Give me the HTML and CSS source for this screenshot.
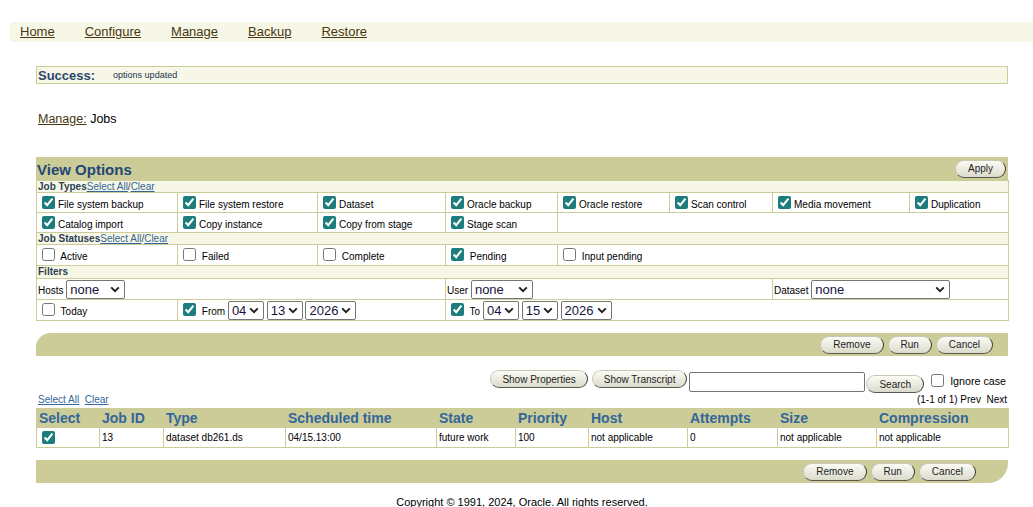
FILE: index.html
```html
<!DOCTYPE html>
<html>
  <head>
    <meta name="viewport" content="width=device-width, initial-scale=1.0">
    <title>Manage: Jobs</title>
    <link rel="stylesheet" href="styles.css">
  </head>
  <body>

    <div class="nav">
      <a href="#">Home</a>
      <a href="#">Configure</a>
      <a href="#">Manage</a>
      <a href="#">Backup</a>
      <a href="#">Restore</a>
    </div>

    <div class="page">

      <div class="message">
        <span class="message-title">Success:</span>
        <span class="message-text">options updated</span>
      </div>

      <div class="crumbs"><a href="#">Manage:</a> Jobs</div>

      <div class="panel-head">
        <span class="panel-title">View Options</span>
        <button class="btn">Apply</button>
      </div>

      <table class="options">
        <colgroup>
          <col style="width: 141px">
          <col style="width: 140px">
          <col style="width: 128px">
          <col style="width: 112px">
          <col style="width: 112px">
          <col style="width: 103px">
          <col style="width: 137px">
          <col style="width: 99px">
        </colgroup>
        <tr class="section">
          <td colspan="8"><b>Job Types</b><a href="#">Select All</a>/<a href="#">Clear</a></td>
        </tr>
        <tr class="row">
          <td><input type="checkbox" checked>File system backup</td>
          <td><input type="checkbox" checked>File system restore</td>
          <td><input type="checkbox" checked>Dataset</td>
          <td><input type="checkbox" checked>Oracle backup</td>
          <td><input type="checkbox" checked>Oracle restore</td>
          <td><input type="checkbox" checked>Scan control</td>
          <td><input type="checkbox" checked>Media movement</td>
          <td><input type="checkbox" checked>Duplication</td>
        </tr>
        <tr class="row">
          <td><input type="checkbox" checked>Catalog import</td>
          <td><input type="checkbox" checked>Copy instance</td>
          <td><input type="checkbox" checked>Copy from stage</td>
          <td><input type="checkbox" checked>Stage scan</td>
          <td colspan="4"></td>
        </tr>
        <tr class="section">
          <td colspan="8"><b>Job Statuses</b><a href="#">Select All</a>/<a href="#">Clear</a></td>
        </tr>
        <tr class="row row-status">
          <td><input type="checkbox"> Active</td>
          <td><input type="checkbox"> Failed</td>
          <td><input type="checkbox"> Complete</td>
          <td><input type="checkbox" checked> Pending</td>
          <td colspan="4"><input type="checkbox"> Input pending</td>
        </tr>
        <tr class="section section-tall">
          <td colspan="8"><b>Filters</b></td>
        </tr>
        <tr class="row row-filter">
          <td colspan="3" class="filter">Hosts <select class="sel-host"><option>none</option></select></td>
          <td colspan="3" class="filter">User <select class="sel-user"><option>none</option></select></td>
          <td colspan="2" class="filter">Dataset <select class="sel-dataset"><option>none</option></select></td>
        </tr>
        <tr class="row row-date">
          <td><input type="checkbox"> Today</td>
          <td colspan="2" class="filter"><input type="checkbox" checked> From
            <select class="sel-num"><option>04</option></select>
            <select class="sel-num"><option>13</option></select>
            <select class="sel-year"><option>2026</option></select>
          </td>
          <td colspan="5" class="filter"><input type="checkbox" checked> To
            <select class="sel-num"><option>04</option></select>
            <select class="sel-num"><option>15</option></select>
            <select class="sel-year"><option>2026</option></select>
          </td>
        </tr>
      </table>

      <div class="action-bar action-bar-top">
        <button class="btn">Remove</button>
        <button class="btn">Run</button>
        <button class="btn">Cancel</button>
      </div>

      <div class="search">
        <button class="btn btn-wide">Show Properties</button>
        <button class="btn btn-wide btn-transcript">Show Transcript</button>
        <input type="text" class="search-input">
        <button class="btn btn-search">Search</button>
        <label class="ignore"><input type="checkbox"> Ignore case</label>
      </div>

      <div class="list-links">
        <div><a href="#">Select All</a>&nbsp; <a href="#">Clear</a></div>
        <div>(1-1 of 1) Prev&nbsp; Next</div>
      </div>

      <table class="jobs">
        <colgroup>
          <col style="width: 63px">
          <col style="width: 64px">
          <col style="width: 122px">
          <col style="width: 151px">
          <col style="width: 79px">
          <col style="width: 73px">
          <col style="width: 99px">
          <col style="width: 90px">
          <col style="width: 99px">
          <col style="width: 132px">
        </colgroup>
        <tr class="jobs-head">
          <th>Select</th>
          <th>Job ID</th>
          <th>Type</th>
          <th>Scheduled time</th>
          <th>State</th>
          <th>Priority</th>
          <th>Host</th>
          <th>Attempts</th>
          <th>Size</th>
          <th>Compression</th>
        </tr>
        <tr class="jobs-row">
          <td><input type="checkbox" checked></td>
          <td>13</td>
          <td>dataset db261.ds</td>
          <td>04/15.13:00</td>
          <td>future work</td>
          <td>100</td>
          <td>not applicable</td>
          <td>0</td>
          <td>not applicable</td>
          <td>not applicable</td>
        </tr>
      </table>

      <div class="action-bar action-bar-bottom">
        <button class="btn">Remove</button>
        <button class="btn">Run</button>
        <button class="btn">Cancel</button>
      </div>

      <div class="copyright">Copyright &copy; 1991, 2024, Oracle. All rights reserved.</div>

    </div>

  </body>
</html>
```

FILE: styles.css
```css
* {
  font-family: "Liberation Sans", Arial, sans-serif;
}

body {
  margin: 0px;
  padding: 0px;
  color: rgb(0, 0, 0);
}

input[type="checkbox"] {
  accent-color: rgb(29, 125, 125);
  width: 13px;
  height: 13px;
}

a {
  color: rgb(51, 102, 153);
}

.nav {
  display: flex;
  align-items: center;
  gap: 30px;
  height: 20px;
  margin: 22px 0px 0px 10px;
  padding-left: 10px;
  background-color: rgb(247, 247, 231);
}

.nav a {
  font-size: 13px;
  line-height: 18px;
  color: rgb(72, 55, 16);
}

.page {
  width: 972px;
  padding-left: 36px;
}

.message {
  display: flex;
  align-items: center;
  height: 16px;
  margin-top: 24px;
  padding-left: 1px;
  border: 1px solid rgb(204, 204, 153);
  background-color: rgb(247, 247, 231);
}

.message-title {
  font-size: 13px;
  font-weight: bold;
  color: rgb(43, 72, 110);
  margin-right: 18px;
}

.message-text {
  font-size: 9px;
  color: rgb(33, 50, 80);
}

.crumbs {
  font-size: 12.5px;
  line-height: 15px;
  margin-top: 28px;
  padding-left: 2px;
}

.crumbs a {
  color: rgb(72, 55, 16);
}

.panel-head {
  display: flex;
  align-items: center;
  justify-content: space-between;
  height: 23px;
  margin-top: 30px;
  padding: 0px 2px 0px 1px;
  background-color: rgb(204, 204, 153);
}

.panel-title {
  font-size: 15px;
  font-weight: bold;
  color: rgb(35, 72, 117);
  margin-top: 1px;
}

.btn {
  height: 18px;
  padding: 0px 12px;
  font-size: 10px;
  color: rgb(30, 30, 30);
  border: 1px solid rgb(200, 200, 185);
  border-right-color: rgb(60, 60, 50);
  border-bottom-color: rgb(90, 90, 80);
  border-radius: 9px;
  background: linear-gradient(rgb(252, 252, 246), rgb(218, 218, 204));
}

.btn-wide {
  padding: 0px 11px;
}

.options {
  width: 972px;
  table-layout: fixed;
  border-collapse: collapse;
  font-size: 10px;
}

.options td {
  border: 1px solid rgb(204, 204, 153);
  padding: 0px 0px 0px 1px;
  white-space: nowrap;
}

.options .section td {
  height: 11px;
  line-height: 10px;
  background-color: rgb(247, 247, 231);
  color: rgb(45, 63, 85);
}

.options .section-tall td {
  height: 12px;
}

.options .section a {
  font-weight: normal;
}

.options .row td {
  height: 19px;
}

.options .row-status td {
  height: 20px;
}

.options .row-filter td {
  height: 20px;
}

.options .row-date td {
  height: 20px;
}

.options input[type="checkbox"] {
  margin: 0px 3px 0px 4px;
  vertical-align: -1px;
}

.filter select {
  appearance: none;
  height: 19px;
  font-size: 13px;
  padding: 0px 14px 0px 3px;
  margin: 0px;
  border: 1px solid rgb(118, 118, 118);
  border-radius: 2px;
  background: rgb(255, 255, 255) url("data:image/svg+xml;utf8,<svg xmlns='http://www.w3.org/2000/svg' width='10' height='7'><path d='M1.2 1.4 L5 5.2 L8.8 1.4' fill='none' stroke='%23222' stroke-width='2'/></svg>") no-repeat right 4px center;
  color: rgb(20, 20, 60);
}

.sel-host {
  width: 59px;
}

.sel-user {
  width: 62px;
}

.sel-dataset {
  width: 139px;
}

.sel-num {
  width: 36px;
}

.sel-year {
  width: 51px;
}

.action-bar {
  display: flex;
  align-items: center;
  justify-content: flex-end;
  gap: 4px;
  height: 23px;
  background-color: rgb(204, 204, 153);
}

.action-bar-top {
  margin-top: 12px;
  padding-right: 15px;
  border-top-left-radius: 15px 14px;
}

.action-bar-bottom {
  margin-top: 12px;
  padding-right: 32px;
  border-bottom-right-radius: 20px;
}

.search {
  display: flex;
  align-items: flex-start;
  justify-content: flex-end;
  height: 22px;
  margin-top: 14px;
  padding-right: 2px;
}

.btn-transcript {
  margin-left: 4px;
}

.search-input {
  width: 174px;
  height: 18px;
  padding: 0px;
  margin: 2px 0px 0px 2px;
  border: 1px solid rgb(118, 118, 118);
  border-radius: 2px;
}

.btn-search {
  margin-top: 5px;
  margin-left: 1px;
}

.ignore {
  display: flex;
  align-items: center;
  font-size: 10.7px;
  margin: 4px 0px 0px 7px;
}

.ignore input {
  margin: 0px 6px 0px 0px;
}

.list-links {
  display: flex;
  justify-content: space-between;
  font-size: 10px;
  line-height: 12px;
  margin-top: 2px;
  padding: 0px 1px 0px 2px;
}

.jobs {
  width: 972px;
  table-layout: fixed;
  border-collapse: collapse;
  margin-top: 2px;
}

.jobs th {
  height: 18px;
  padding: 0px 0px 0px 2px;
  text-align: left;
  font-size: 14px;
  color: rgb(51, 102, 153);
  background-color: rgb(204, 204, 153);
  border: 1px solid rgb(204, 204, 153);
}

.jobs td {
  height: 19px;
  padding: 0px 0px 0px 2px;
  font-size: 10px;
  border: 1px solid rgb(204, 204, 153);
  white-space: nowrap;
}

.jobs td input {
  margin: 0px 0px 0px 3px;
  vertical-align: middle;
}

.copyright {
  font-size: 11px;
  text-align: center;
  margin-top: 13px;
}
```
